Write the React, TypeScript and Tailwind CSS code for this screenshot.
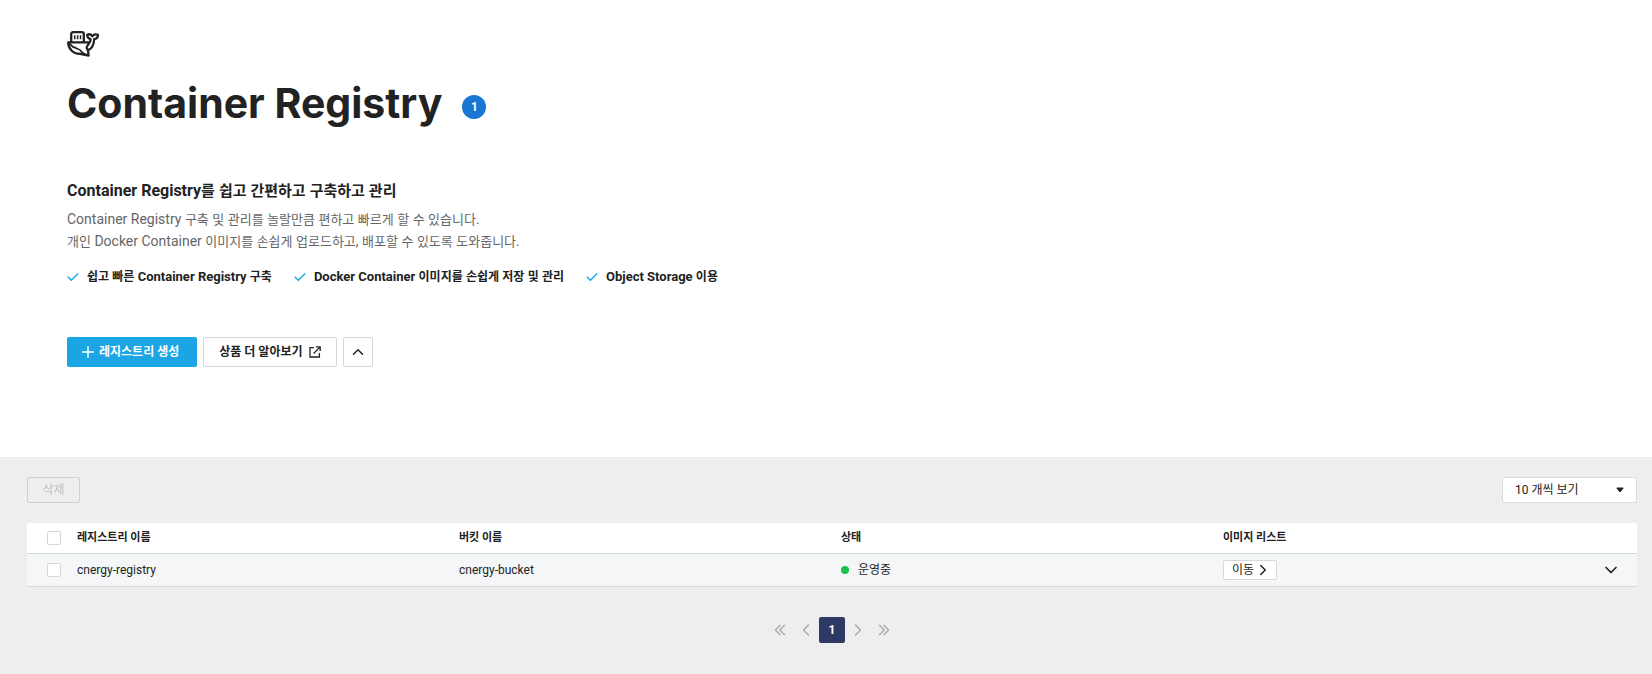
import React, { useState } from 'react';
import { ChevronDown, ChevronLeft, ChevronRight, ChevronUp, Plus } from 'lucide-react';

interface Registry {
  name: string;
  bucket: string;
  status: string;
}

const registries: Registry[] = [
  { name: 'cnergy-registry', bucket: 'cnergy-bucket', status: '운영중' },
];

const features = [
  '쉽고 빠른 Container Registry 구축',
  'Docker Container 이미지를 손쉽게 저장 및 관리',
  'Object Storage 이용',
];

// Hangul looks larger than Roboto at the same size, so it is set one step smaller
const Mixed = ({ text, hangul }: { text: string; hangul: string }) => (
  <span>
    {text.split(/([가-힣]+)/).map((part, i) => (i % 2 ? <span key={i} className={hangul}>{part}</span> : part))}
  </span>
);

const WhaleIcon = () => (
  <svg
    className="block h-[26px] w-8"
    viewBox="0 0 32 26"
    fill="none"
    stroke="currentColor"
    strokeWidth="2.3"
    strokeLinejoin="round"
    strokeLinecap="round"
    aria-hidden="true"
  >
    {/* container */}
    <path d="M4.2 11V3.2Q4.2 1.2 6.2 1.2H14.8Q16.8 1.2 16.8 3.2V11" />
    <path d="M7.7 4.2V8.2M10.6 4.2V8.2M13.5 4.2V8.2" strokeWidth="1.5" strokeLinecap="butt" />
    {/* body */}
    <path d="M22 11.4H1.2C1.2 17 5.5 22.8 13 22.8L21.6 24.6L21 19.4C25.3 17.3 27 12.6 27.2 8.2C29.6 7.8 31 6.2 31 3.8C28.6 2.8 26.6 3.6 25.4 5.2C24 3.4 22 2.8 20.2 3.8C20.2 6.2 21.4 7.6 23.6 8.2C23.6 9.6 23 11 22 12.2C21.4 14 19.6 15 19.6 17L21 19.4" />
    <path d="M2.4 12.6L5.6 15.6L11 18Q13.4 18.6 14.6 20.8Q16.4 22.8 20.6 24.2" strokeWidth="1.8" />
  </svg>
);

const CheckIcon = () => (
  <svg className="block h-3 w-3 text-[#1ba5e5]" viewBox="0 0 12 12" fill="none" stroke="currentColor" strokeWidth="1.4" aria-hidden="true">
    <path d="M.8 5.8L4.4 9.3L11.2 2.6" />
  </svg>
);

const ExternalIcon = () => (
  <svg className="block h-3 w-3" viewBox="0 0 12 12" fill="none" stroke="currentColor" strokeWidth="1.3" aria-hidden="true">
    <path d="M5 1.6H1V11H10.4V7M7 .9H11.2V5M11 1.1L4.6 7.5" />
  </svg>
);

const DoubleChevron = ({ d }: { d: string }) => (
  <svg className="block h-3 w-3" viewBox="0 0 12 12" fill="none" stroke="currentColor" strokeWidth="1.4" aria-hidden="true">
    <path d={d} />
  </svg>
);

const checkboxClass =
  'block h-[14px] w-[14px] appearance-none rounded-xs border border-[#d5d8da] bg-white checked:border-[#1ba5e5] checked:bg-[#1ba5e5]';

const pageButtonClass = 'flex h-[26px] w-[26px] items-center justify-center';

const App: React.FC = () => {
  const [checked, setChecked] = useState(false);
  const [open, setOpen] = useState(true);

  return (
    <div className="flex min-h-screen flex-col bg-[#eee] font-[Roboto,'Noto_Sans_CJK_KR',sans-serif] text-xs text-[#222]">
      <header className="bg-white px-[67px] pt-[31px] pb-[90px]">
        <WhaleIcon />
        <div className="mt-5 flex items-center gap-5">
          <h1 className="font-[Inter,sans-serif] text-[41px] leading-[52px] font-bold">Container Registry</h1>
          <span className="mt-2 flex h-6 w-6 items-center justify-center rounded-full bg-[#1976d2] text-xs font-bold text-white">
            1
          </span>
        </div>
        <h2 className="mt-[50px] text-base leading-6 font-bold">
          <Mixed text="Container Registry를 쉽고 간편하고 구축하고 관리" hangul="text-[15px] leading-none" />
        </h2>
        <p className="mt-[5px] text-sm leading-[22px] text-[#666]">
          <Mixed text="Container Registry 구축 및 관리를 놀랄만큼 편하고 빠르게 할 수 있습니다." hangul="text-[13px] leading-none" />
          <br />
          <Mixed text="개인 Docker Container 이미지를 손쉽게 업로드하고, 배포할 수 있도록 도와줍니다." hangul="text-[13px] leading-none" />
        </p>
        <ul className="mt-[15px] flex flex-wrap gap-[22px]">
          {features.map((feature) => (
            <li key={feature} className="flex items-center gap-2 text-[13px] leading-5 font-bold">
              <CheckIcon />
              <Mixed text={feature} hangul="text-xs leading-none" />
            </li>
          ))}
        </ul>
        <div className="mt-[50px] flex gap-[6px]">
          <button type="button" className="flex h-[30px] items-center gap-[2px] rounded-xs bg-[#1ba5e5] pr-[18px] pl-3 font-bold text-white">
            <Plus className="h-[18px] w-[18px]" strokeWidth={2} />
            레지스트리 생성
          </button>
          <button type="button" className="flex h-[30px] items-center gap-[6px] rounded-xs border border-[#d5d8da] px-[15px] font-bold">
            상품 더 알아보기
            <ExternalIcon />
          </button>
          <button
            type="button"
            aria-label="접기"
            onClick={() => setOpen(!open)}
            className="flex h-[30px] w-[30px] items-center justify-center rounded-xs border border-[#d5d8da]"
          >
            {open ? <ChevronUp className="h-[18px] w-[18px]" /> : <ChevronDown className="h-[18px] w-[18px]" />}
          </button>
        </div>
      </header>

      <main className="pt-5 pr-[15px] pb-8 pl-[27px]">
        <div className="flex items-center justify-between">
          <button type="button" disabled className="h-[26px] w-[53px] rounded-xs border border-[#c9d1da] text-[#bdc3c9]">
            삭제
          </button>
          <div className="relative">
            <select
              aria-label="페이지당 개수"
              className="block h-[26px] w-[135px] appearance-none rounded-xs border border-[#d9dbdd] bg-white pr-6 pl-3"
            >
              <option>10 개씩 보기</option>
              <option>20 개씩 보기</option>
            </select>
            <svg className="pointer-events-none absolute top-[10px] right-[13px] h-[6px] w-2" viewBox="0 0 8 6" aria-hidden="true">
              <path d="M.8 1H7.2L4 5Z" fill="#222" stroke="#222" strokeLinejoin="round" />
            </svg>
          </div>
        </div>

        <table className="mt-5 w-full table-fixed border-separate border-spacing-0 text-left">
          <colgroup>
            <col className="w-[50px]" />
            <col />
            <col />
            <col />
            <col />
            <col className="w-8" />
          </colgroup>
          <thead>
            <tr className="h-[31px] bg-white text-[11px] [&>th]:border-b [&>th]:border-[#d5dadb]">
              <th className="rounded-tl-xs pl-5">
                <input type="checkbox" aria-label="전체 선택" className={checkboxClass} checked={checked} onChange={() => setChecked(!checked)} />
              </th>
              <th>레지스트리 이름</th>
              <th>버킷 이름</th>
              <th>상태</th>
              <th>이미지 리스트</th>
              <th className="rounded-tr-xs" />
            </tr>
          </thead>
          <tbody>
            {registries.map((registry) => (
              <tr key={registry.name} className="h-[33px] bg-[#f4f6f8] [&>td]:border-b [&>td]:border-[#d5dadb]">
                <td className="pl-5">
                  <input
                    type="checkbox"
                    aria-label={registry.name}
                    className={checkboxClass}
                    checked={checked}
                    onChange={() => setChecked(!checked)}
                  />
                </td>
                <td>{registry.name}</td>
                <td>{registry.bucket}</td>
                <td>
                  <span className="flex items-center gap-[9px]">
                    <span className="h-2 w-2 rounded-full bg-[#1bc24a]" />
                    {registry.status}
                  </span>
                </td>
                <td>
                  <button type="button" className="flex h-5 items-center rounded-xs border border-[#d5d8da] bg-white pr-1 pl-2">
                    이동
                    <ChevronRight className="h-[18px] w-[18px]" />
                  </button>
                </td>
                <td>
                  <button type="button" aria-label="상세 보기" className="-ml-1 block">
                    <ChevronDown className="h-5 w-5" />
                  </button>
                </td>
              </tr>
            ))}
          </tbody>
        </table>

        <nav aria-label="페이지" className="mt-[30px] flex justify-center text-[#aaa]">
          <button type="button" aria-label="처음" className={pageButtonClass}>
            <DoubleChevron d="M6.4 1L1.4 6L6.4 11M10.8 1L5.8 6L10.8 11" />
          </button>
          <button type="button" aria-label="이전" className={pageButtonClass}>
            <ChevronLeft className="h-5 w-5" strokeWidth={1.75} />
          </button>
          <button type="button" aria-current="page" className="h-[26px] w-[26px] rounded-xs bg-[#2d3a64] font-bold text-white">
            1
          </button>
          <button type="button" aria-label="다음" className={pageButtonClass}>
            <ChevronRight className="h-5 w-5" strokeWidth={1.75} />
          </button>
          <button type="button" aria-label="마지막" className={pageButtonClass}>
            <DoubleChevron d="M1.2 1L6.2 6L1.2 11M5.6 1L10.6 6L5.6 11" />
          </button>
        </nav>
      </main>
    </div>
  );
};

export default App;
